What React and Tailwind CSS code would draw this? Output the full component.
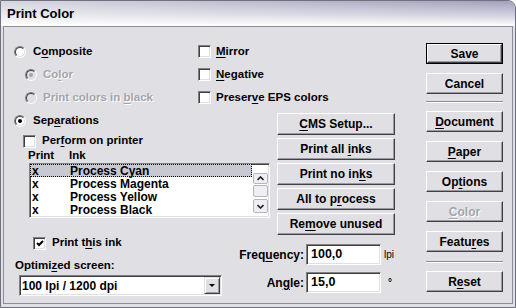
import React from 'react';

// accelerator letter helper: underlines one character
const Acc = ({ t, i }) => {
  if (i == null) return <span>{t}</span>;
  return (
    <span className="whitespace-pre">
      {t.slice(0, i)}
      <u className="underline decoration-1 underline-offset-[2px]">{t[i]}</u>
      {t.slice(i + 1)}
    </span>
  );
};

const sunken =
  'border border-t-[#808080] border-l-[#808080] border-b-white border-r-white shadow-[inset_1px_1px_0_#404040,inset_-1px_-1px_0_#e0dfe3]';

const dim = 'text-[#a4a4ac] [text-shadow:1px_1px_0_#ffffff]';

const Radio = ({ checked, disabled }) => (
  <div className="w-[12px] h-[12px] rounded-full shrink-0 flex border border-t-[#808080] border-l-[#808080] border-b-white border-r-white">
    <div
      className={`flex-1 rounded-full flex items-center justify-center border border-t-[#404040] border-l-[#404040] border-b-[#e0dfe3] border-r-[#e0dfe3] ${
        disabled ? 'bg-[#e0dfe3]' : 'bg-white'
      }`}
    >
      {checked && <div className={`w-[4px] h-[4px] rounded-full ${disabled ? 'bg-[#a4a4ac]' : 'bg-black'}`} />}
    </div>
  </div>
);

const Check = ({ checked }) => (
  <div className={`w-[13px] h-[13px] shrink-0 bg-white flex items-center justify-center ${sunken}`}>
    {checked && (
      <svg width="8" height="7" viewBox="0 0 8 7">
        <polyline points="1,3 3,5 7,1" fill="none" stroke="#000" strokeWidth="2" />
      </svg>
    )}
  </div>
);

const Btn = ({ children, className = '', disabled }) => (
  <div
    className={`flex items-center justify-center bg-[#e0dfe3] border border-t-white border-l-white border-r-[#404040] border-b-[#404040] shadow-[inset_-1px_-1px_0_#9a9aa6] text-[12px] font-bold ${
      disabled ? dim : ''
    } ${className}`}
  >
    {children}
  </div>
);

const Chevron = ({ up }) => (
  <svg width="7" height="5" viewBox="0 0 7 5">
    <polyline
      points={up ? '0.5,4 3.5,1 6.5,4' : '0.5,1 3.5,4 6.5,1'}
      fill="none"
      stroke="#202030"
      strokeWidth="1.6"
    />
  </svg>
);

const inks = ['Process Cyan', 'Process Magenta', 'Process Yellow', 'Process Black'];

export default function App() {
  return (
    <div className="w-[516px] h-[308px] flex flex-col bg-[#e0dfe3] border border-[#70707e] rounded-tr-[8px] overflow-hidden font-['Liberation_Sans',Arial,sans-serif] text-black">
      {/* title bar */}
      <div className="h-[25px] shrink-0 flex items-center pl-[6px] text-[13px] font-bold bg-[linear-gradient(to_bottom,rgba(255,255,255,0)_0%,rgba(255,255,255,0.5)_55%,#ffffff_100%),linear-gradient(to_right,#d6d6e0,#a0a0bc)]">
        Print Color
      </div>

      <div className="flex-1 mx-[2px] mb-[3px] border border-[#8c8c9a] flex text-[11.5px] font-bold">
        {/* main area */}
        <div className="w-[422px] pl-[10px] pt-[13px] flex flex-col">
          {/* top options */}
          <div className="flex">
            <div className="w-[184px] flex flex-col">
              <div className="h-[23px] flex items-center">
                <Radio />
                <span className="ml-[7px]"><Acc t="Composite" i={1} /></span>
              </div>
              <div className="h-[23px] flex items-center pl-[11px]">
                <Radio checked disabled />
                <span className={`ml-[6px] ${dim}`}><Acc t="Color" i={2} /></span>
              </div>
              <div className="h-[23px] flex items-center pl-[11px]">
                <Radio disabled />
                <span className={`ml-[6px] ${dim}`}><Acc t="Print colors in black" i={16} /></span>
              </div>
            </div>
            <div className="flex flex-col">
              <div className="h-[23px] flex items-center">
                <Check />
                <span className="ml-[5px]"><Acc t="Mirror" i={0} /></span>
              </div>
              <div className="h-[23px] flex items-center">
                <Check />
                <span className="ml-[5px]"><Acc t="Negative" i={0} /></span>
              </div>
              <div className="h-[23px] flex items-center">
                <Check />
                <span className="ml-[5px]"><Acc t="Preserve EPS colors" i={6} /></span>
              </div>
            </div>
          </div>

          {/* separations */}
          <div className="flex">
            <div className="w-[256px] flex flex-col">
              <div className="h-[24px] flex items-center">
                <Radio checked />
                <span className="ml-[7px]"><Acc t="Separations" i={3} /></span>
              </div>
              <div className="h-[16px] flex items-center pl-[9px]">
                <Check />
                <span className="ml-[6px]"><Acc t="Perform on printer" i={3} /></span>
              </div>
              <div className="h-[13px] flex items-center pl-[14px]">
                <span className="w-[41px]">Print</span>
                <span>Ink</span>
              </div>

              {/* ink list */}
              <div className={`mt-[1px] ml-[15px] w-[241px] h-[55px] bg-white flex overflow-hidden ${sunken}`}>
                <div className="flex-1 flex flex-col text-[12px] font-bold">
                  {inks.map((name, idx) => (
                    <div
                      key={name}
                      className={`h-[13px] shrink-0 flex items-center ${
                        idx === 0 ? 'bg-[#c8c8d2] outline outline-1 outline-dotted outline-black -outline-offset-1' : ''
                      }`}
                    >
                      <span className="w-[40px] pl-[2px]">x</span>
                      <span>{name}</span>
                    </div>
                  ))}
                </div>
                <div className="w-[17px] flex flex-col items-center pt-[9px]">
                  <div className="w-[15px] h-[11px] rounded-[2px] border border-[#b4b4c2] bg-[#eeeef3] flex items-center justify-center">
                    <Chevron up />
                  </div>
                  <div className="mt-[1px] w-[15px] h-[12px] rounded-[2px] border border-[#b4b4c2] bg-[#eeeef3]" />
                  <div className="mt-[2px] w-[15px] h-[14px] rounded-[2px] border border-[#b4b4c2] bg-[#eeeef3] flex items-center justify-center">
                    <Chevron />
                  </div>
                </div>
              </div>

              <div className="mt-[17px] h-[16px] flex items-center pl-[19px]">
                <Check checked />
                <span className="ml-[6px]"><Acc t="Print this ink" i={7} /></span>
              </div>
              <div className="mt-[7px] h-[16px] flex items-center pl-[1px]">
                <Acc t="Optimized screen:" i={6} />
              </div>
              <div className={`mt-[1px] ml-[5px] w-[203px] h-[21px] bg-white flex items-center justify-between ${sunken}`}>
                <span className="pl-[2px] text-[12px]">100 lpi / 1200 dpi</span>
                <div className="mr-[1px] w-[16px] h-[17px] bg-[#e0dfe3] flex items-center justify-center border border-t-[#e0dfe3] border-l-[#e0dfe3] border-r-[#404040] border-b-[#404040] shadow-[inset_1px_1px_0_#fff,inset_-1px_-1px_0_#9a9aa6]">
                  <div className="w-0 h-0 border-l-[3px] border-r-[3px] border-t-[3px] border-l-transparent border-r-transparent border-t-black" />
                </div>
              </div>
            </div>

            {/* middle buttons */}
            <div className="ml-[7px] w-[118px] flex flex-col pt-[4px]">
              <div className="flex flex-col gap-[3px]">
                <Btn className="h-[22px]"><Acc t="CMS Setup..." i={0} /></Btn>
                <Btn className="h-[22px]"><Acc t="Print all inks" i={10} /></Btn>
                <Btn className="h-[22px]"><Acc t="Print no inks" i={11} /></Btn>
                <Btn className="h-[22px]"><Acc t="All to process" i={8} /></Btn>
                <Btn className="h-[22px]"><Acc t="Remove unused" i={2} /></Btn>
              </div>
              <div className="mt-[9px] -ml-[41px] w-[170px] flex items-center">
                <span className="w-[70px] pr-[2px] text-right text-[12px]"><Acc t="Frequency:" i={4} /></span>
                <div className={`w-[75px] h-[21px] bg-white flex items-center pl-[4px] text-[12.5px] ${sunken}`}>100,0</div>
                <span className="ml-[3px] text-[10px] font-normal">lpi</span>
              </div>
              <div className="mt-[7px] -ml-[41px] w-[170px] flex items-center">
                <span className="w-[70px] pr-[2px] text-right text-[12px]"><Acc t="Angle:" i={2} /></span>
                <div className={`w-[75px] h-[21px] bg-white flex items-center pl-[4px] text-[12.5px] ${sunken}`}>15,0</div>
                <span className="ml-[7px] text-[10px]">°</span>
              </div>
            </div>
          </div>
        </div>

        {/* right buttons */}
        <div className="w-[77px] flex flex-col pt-[16px]">
          <div className="h-[21px] border border-black flex">
            <Btn className="flex-1">Save</Btn>
          </div>
          <Btn className="mt-[9px] h-[21px]">Cancel</Btn>
          <div className="mt-[7px] h-[2px] border-t border-t-[#8c8c9a] border-b border-b-white" />
          <Btn className="mt-[8px] h-[21px]"><Acc t="Document" i={0} /></Btn>
          <Btn className="mt-[9px] h-[21px]"><Acc t="Paper" i={0} /></Btn>
          <Btn className="mt-[9px] h-[21px]"><Acc t="Options" i={2} /></Btn>
          <Btn className="mt-[9px] h-[21px]" disabled><Acc t="Color" i={0} /></Btn>
          <Btn className="mt-[9px] h-[21px]"><Acc t="Features" i={5} /></Btn>
          <div className="mt-[9px] h-[2px] border-t border-t-[#8c8c9a] border-b border-b-white" />
          <Btn className="mt-[8px] h-[21px]"><Acc t="Reset" i={1} /></Btn>
        </div>
      </div>
    </div>
  );
}
